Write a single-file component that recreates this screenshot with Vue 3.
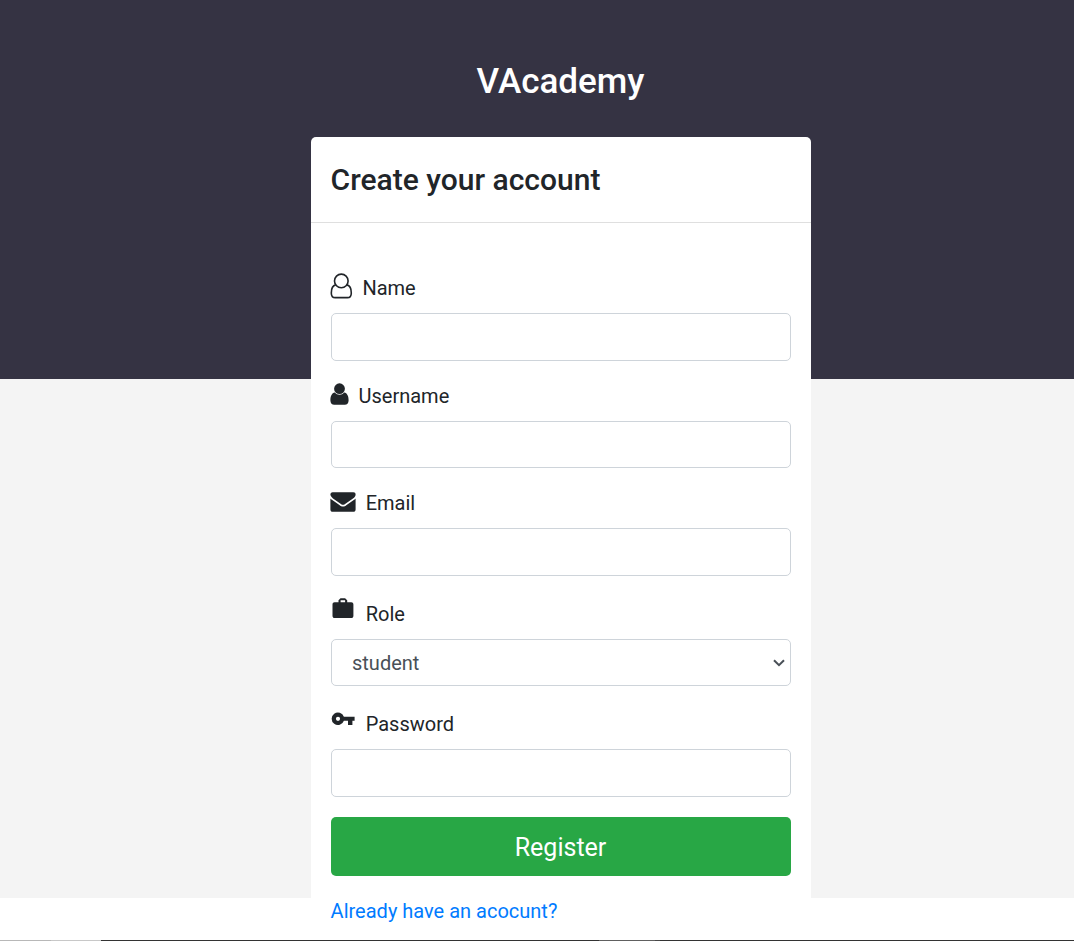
<script setup>
import { ref } from 'vue'

const role = ref('student')
const fields = [
  { id: 'name', label: 'Name' },
  { id: 'username', label: 'Username' },
  { id: 'email', label: 'Email' },
  { id: 'role', label: 'Role' },
  { id: 'password', label: 'Password' },
]
</script>

<template>
  <div class="page">
    <main class="column">
      <h1>VAcademy</h1>
      <section class="card">
        <header><h2>Create your account</h2></header>
        <form @submit.prevent>
          <div v-for="f in fields" :key="f.id" class="field" :class="f.id">
            <label :for="f.id">
              <svg v-if="f.id === 'name'" class="icon" width="23" height="26" viewBox="0 0 23 26">
                <g fill="none" stroke="#212529" stroke-width="1.6">
                  <circle cx="11.3" cy="7.9" r="6.8" />
                  <path d="M5.7 11.9C2.7 12.6 1.3 15.8 1.3 19.9C1.3 22.6 2.8 24.6 5.2 24.6H17.4C19.8 24.6 21.3 22.6 21.3 19.9C21.3 15.8 19.9 12.6 16.9 11.9" />
                </g>
              </svg>
              <svg v-else-if="f.id === 'username'" class="icon" width="19" height="22" viewBox="0 0 19 22">
                <g fill="#212529">
                  <circle cx="9.5" cy="5.7" r="5.4" />
                  <path d="M4.9 9.6C1.6 10 .4 13.6 .4 17.4C.4 20.1 2 21.7 4.2 21.7H14.8C17 21.7 18.6 20.1 18.6 17.4C18.6 13.6 17.4 10 14.1 9.6C12.9 11 11.4 11.8 9.5 11.8S6.1 11 4.9 9.6Z" />
                </g>
              </svg>
              <svg v-else-if="f.id === 'email'" class="icon" width="26" height="20" viewBox="0 0 26 20">
                <g fill="#212529">
                  <path d="M2.6.2H23.4C24.8.2 25.6 1 25.6 2.4C25.6 4 24.5 5.4 23 6.4L15.8 11.4C14.8 12.1 14 12.7 13 12.7S11.2 12.1 10.2 11.4L3 6.4C1.7 5.5.4 4 .4 2.6C.4 1.2 1.2.2 2.6.2Z" />
                  <path d="M.4 6.5C.8 7 1.3 7.4 1.9 7.8L9.4 13C10.6 13.9 11.7 14.6 13 14.6S15.4 13.9 16.6 13L24.1 7.8C24.7 7.4 25.2 7 25.6 6.5V17.5C25.6 18.9 24.7 19.8 23.3 19.8H2.7C1.3 19.8.4 18.9.4 17.5Z" />
                </g>
              </svg>
              <svg v-else-if="f.id === 'role'" class="icon" width="22" height="21" viewBox="0 0 22 21">
                <path fill="#212529" fill-rule="evenodd" d="M6.5 4.3V2.3L8.5.2H13.1L15.2 2.3V4.3H19.3C20.5 4.3 21.4 5.2 21.4 6.4V18C21.4 19.2 20.5 20.1 19.3 20.1H2.6C1.4 20.1.5 19.2.5 18V6.4C.5 5.2 1.4 4.3 2.6 4.3ZM8.6 4.3H13.1V2.3H8.6Z" />
              </svg>
              <svg v-else class="icon" width="24" height="14" viewBox="-0.5 0 24 14">
                <path fill="#212529" fill-rule="evenodd" d="M12.4 4.7A6.3 6.3 0 1 0 12.4 8.8H16.5V12.9H20.9V8.8H23.1V4.7ZM6.5 8.9A2.1 2.1 0 1 1 6.5 4.7A2.1 2.1 0 1 1 6.5 8.9Z" />
              </svg>
              <span>{{ f.label }}</span>
            </label>
            <div v-if="f.id === 'role'" class="select">
              <select id="role" v-model="role"><option>student</option></select>
              <svg class="chevron" width="12" height="8" viewBox="0 0 12 8">
                <path d="M1 1.2L6 6.2L11 1.2" fill="none" stroke="#495057" stroke-width="2" />
              </svg>
            </div>
            <input v-else :id="f.id" :type="f.id === 'password' ? 'password' : 'text'" />
          </div>
          <button>Register</button>
          <a href="#">Already have an acocunt?</a>
        </form>
      </section>
    </main>
    <div class="edge"><i class="e1"></i><i class="e2"></i><i class="e3"></i><i class="e4"></i><i class="e5"></i></div>
  </div>
</template>

<style>
body { margin: 0; overflow: hidden; }
</style>

<style scoped>
* { box-sizing: border-box; }
.page {
  height: 941px;
  overflow: hidden;
  display: flex;
  flex-direction: column;
  background: linear-gradient(#353343 0 379px, #f4f4f4 379px 898px, #fff 898px);
  font-family: Roboto, "Liberation Sans", sans-serif;
  font-size: 20px;
  line-height: 30px;
  color: #212529;
}
.column { width: 500px; height: 940px; margin-left: 311px; overflow: hidden; }
h1 {
  margin: 0;
  height: 137px;
  padding: 61px 1px 0 0;
  font-size: 35px;
  line-height: 42px;
  font-weight: 500;
  color: #fff;
  text-align: center;
}
.card { height: 803px; background: #fff; border-radius: 5px 5px 0 0; }
header { height: 86px; padding: 25px 20px 0 19.6px; border-bottom: 1px solid #dfdfdf; }
h2 { margin: 0; font-size: 30px; line-height: 36px; font-weight: 500; white-space: nowrap; }
form { display: flex; flex-direction: column; padding: 40px 20px 0; }
label { display: flex; align-items: flex-end; height: 60px; padding-bottom: 10px; }
.name label { height: 50px; }
.role label, .password label { height: 63px; }
.icon { display: block; flex: none; }
.name .icon { margin: 0 9.4px 4px -1px; }
.username .icon { margin: 0 9.5px 6px -1px; }
.email .icon { margin: 0 9.7px 6px -1px; }
.role .icon { margin: 0 11.7px 10px 1px; }
.password .icon { margin: 0 10.7px 13px 0; }
input, select {
  display: block;
  width: 100%;
  height: 48px;
  margin: 0;
  border: 1px solid #ced4da;
  border-radius: 5px;
  background: #fff;
  outline: none;
}
.username input, select { height: 47px; }
.select { position: relative; }
select { appearance: none; padding: 0 20px; font: inherit; color: #495057; }
.chevron { position: absolute; right: 6px; top: 20px; }
button {
  height: 59px;
  margin: 20px 0;
  padding: 1px 1px 0 0;
  border: 0;
  border-radius: 5px;
  background: #28a745;
  color: #fff;
  font: 400 25px/37px Roboto, sans-serif;
}
a { margin-left: -0.4px; color: #007bff; text-decoration: none; }
.edge { display: flex; height: 1px; background: #333; }
.e1 { width: 51px; background: #b8b8b8; }
.e2 { width: 50px; background: #c8c8c8; }
.e3 { width: 498px; }
.e4 { width: 56px; background: #606060; }
.e5 { width: 5px; background: #484848; }
</style>
